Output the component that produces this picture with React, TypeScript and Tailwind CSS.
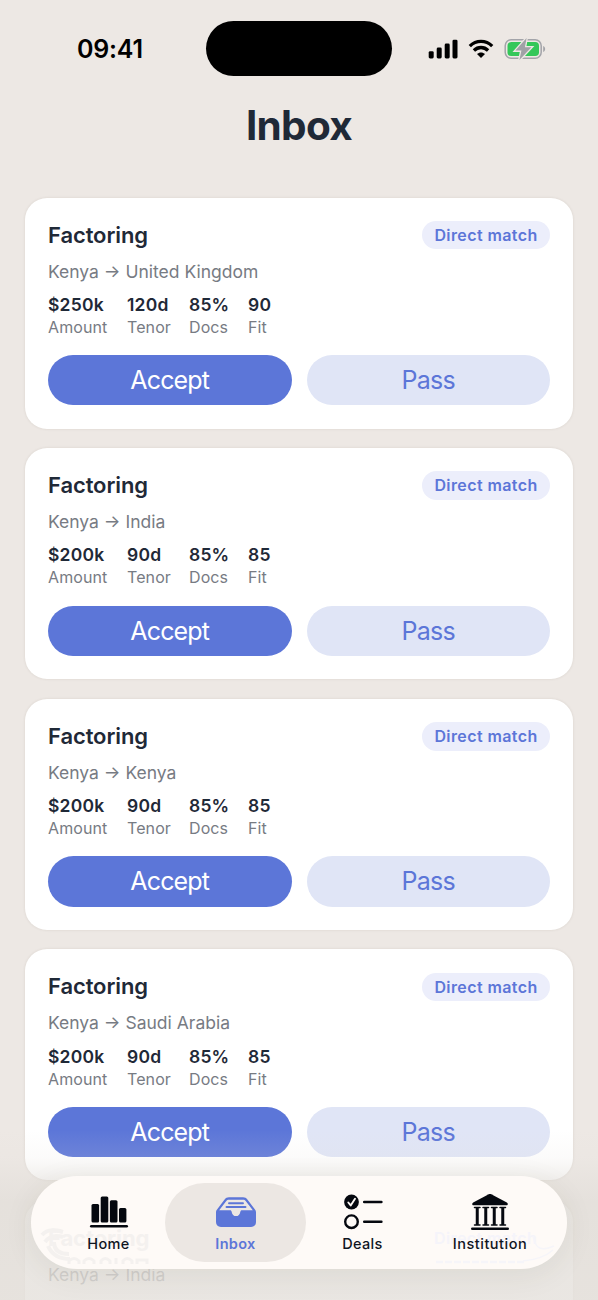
import React from 'react';

interface Deal {
  destination: string;
  amount: string;
  tenor: string;
  docs: string;
  fit: string;
}

const deals: Deal[] = [
  { destination: 'United Kingdom', amount: '$250k', tenor: '120d', docs: '85%', fit: '90' },
  { destination: 'India', amount: '$200k', tenor: '90d', docs: '85%', fit: '85' },
  { destination: 'Kenya', amount: '$200k', tenor: '90d', docs: '85%', fit: '85' },
  { destination: 'Saudi Arabia', amount: '$200k', tenor: '90d', docs: '85%', fit: '85' },
];

const StatusBar: React.FC = () => (
  <div className="flex h-[76px] shrink-0 pt-[21px]">
    <div className="w-[206px] pl-[77px] text-[25px] leading-[56px] font-semibold tracking-[-0.2px] text-black">09:41</div>
    <div className="h-[55px] w-[186px] rounded-full bg-black" />
    <div className="flex h-[55px] items-center pl-[36px]">
      <svg width="30" height="20" viewBox="0 0 30 20">
        <rect x="0.7" y="12.2" width="5" height="7.3" rx="1.4" />
        <rect x="8.7" y="8.5" width="5" height="11" rx="1.4" />
        <rect x="16.7" y="4.5" width="5" height="15" rx="1.4" />
        <rect x="24.5" y="0.7" width="5" height="18.8" rx="1.4" />
      </svg>
      <svg className="ml-[10px]" width="26" height="20" viewBox="0 0 26 20" fill="none" stroke="#000" strokeWidth="3.3">
        <path d="M1.8 7.1C8.2.9 17.8.9 24.2 7.1" />
        <path d="M5.9 11.5C10 7.5 16 7.5 20.1 11.5" />
        <path d="M9 15C11.2 12.9 14.8 12.9 17 15L13 19Z" fill="#000" stroke="none" />
      </svg>
      <svg className="ml-[10px]" width="42" height="22" viewBox="0 0 42 22">
        <rect x="1.2" y="1.7" width="36" height="18.6" rx="6" fill="none" stroke="#a3a4a9" strokeWidth="1.5" />
        <rect x="3.5" y="4" width="31.5" height="14" rx="3.8" fill="#34c759" />
        <path d="M39.2 8v6c2.6-1 2.6-5 0-6Z" fill="#a3a4a9" />
        <path
          d="M22.6 0 11.4 12.6h6L15.4 22 27.4 9.2h-6.5Z"
          fill="#a0a1a6"
          stroke="#ede8e4"
          strokeWidth="2.6"
          paintOrder="stroke"
        />
      </svg>
    </div>
  </div>
);

const Stat: React.FC<{ value: string; label: string; className: string }> = ({ value, label, className }) => (
  <div className={className}>
    <div className="text-[17.5px] leading-[22px] font-semibold tracking-[0.2px] text-[#1f2937]">{value}</div>
    <div className="text-[16px] leading-[22px] tracking-[0.1px] text-[#777b83]">{label}</div>
  </div>
);

const cardClass = 'h-[231px] shrink-0 rounded-[22px] bg-white px-[23px] shadow-[0_0_3px_rgba(60,40,20,0.1)]';

const DealCard: React.FC<{ deal: Deal }> = ({ deal }) => (
  <div className={`pt-[23px] ${cardClass}`}>
    <div className="flex h-[29px] items-center justify-between">
      <h2 className="text-[22px] leading-[29px] font-semibold tracking-[-0.1px] text-[#1f2937]">Factoring</h2>
      <span className="w-[128px] rounded-full bg-[#eceefb] text-center text-[16px] leading-[28.5px] font-semibold tracking-[0.4px] text-[#5c76d8]">
        Direct match
      </span>
    </div>
    <p className="mt-[9px] text-[17.5px] leading-[25px] text-[#777b83]">Kenya → {deal.destination}</p>
    <div className="mt-[10.2px] flex">
      <Stat value={deal.amount} label="Amount" className="w-[79px]" />
      <Stat value={deal.tenor} label="Tenor" className="w-[62px]" />
      <Stat value={deal.docs} label="Docs" className="w-[59px]" />
      <Stat value={deal.fit} label="Fit" className="w-[59px]" />
    </div>
    <div className="mt-[17.2px] flex gap-[15px] text-[25px] leading-[51.5px] tracking-[-0.85px]">
      <button className="h-[50.5px] flex-1 rounded-full bg-[#5c76d8] text-white">Accept</button>
      <button className="h-[50.5px] flex-1 rounded-full bg-[#e0e5f6] tracking-[-0.7px] text-[#5c76d8]">Pass</button>
    </div>
  </div>
);

const HomeIcon = () => (
  <svg width="40" height="36" viewBox="0 0 40 36" fill="#05080f">
    <rect x="2.5" y="10" width="7.6" height="18.5" rx="1.5" />
    <rect x="11.7" y="2.5" width="7.6" height="26" rx="1.5" />
    <rect x="20.9" y="6.3" width="7.6" height="22.2" rx="1.5" />
    <rect x="30" y="14" width="7.4" height="14.5" rx="1.5" />
    <rect x="1" y="31" width="38" height="2.5" rx="1.25" />
  </svg>
);

const InboxIcon = () => (
  <svg width="42" height="36" viewBox="0 0 42 36">
    <path
      d="M1 18.5c0-1.7.7-2.7 1.8-4L9.6 5.5C10.7 4 12 3.3 14 3.3h14c2 0 3.3.7 4.4 2.2l6.8 9c1.1 1.3 1.8 2.3 1.8 4v9.6c0 3-1.8 4.9-4.9 4.9H5.9C2.8 33 1 31.1 1 28.1Z"
      fill="#5c76d8"
    />
    <path
      d="M4.2 16.3 11.3 7c.7-.9 1.4-1.3 2.5-1.3h14.4c1.1 0 1.8.4 2.5 1.3l7.1 9.3H27c-1 0-1.5.6-1.7 1.6-.4 2.7-2 4.2-4.3 4.2s-3.9-1.5-4.3-4.2c-.2-1-.7-1.6-1.7-1.6Z"
      fill="#ece7e3"
    />
    <path d="M14 9.2h14M11.500 13h19" stroke="#5c76d8" strokeWidth="1.9" strokeLinecap="round" />
  </svg>
);

const DealsIcon = () => (
  <svg width="40" height="36" viewBox="0 0 40 36" fill="none" stroke="#05080f">
    <circle cx="8.5" cy="8" r="7.4" fill="#05080f" stroke="none" />
    <path d="m5.300 8.500 2.400 2.900 4.300-6.600" stroke="#fefaf7" strokeWidth="1.9" strokeLinecap="round" strokeLinejoin="round" />
    <circle cx="8.5" cy="27.7" r="6.3" strokeWidth="2.4" />
    <path d="M21.2 8h17.2M21.2 27.7h17.2" strokeWidth="2.5" strokeLinecap="round" />
  </svg>
);

const InstitutionIcon = () => (
  <svg width="40" height="38" viewBox="0 0 40 38" fill="#05080f">
    <path d="M18.7 1.3c.9-.4 1.7-.4 2.6 0l15.500 8.200c.7.4 1 .8 1 1.5 0 .8-.5 1.3-1.3 1.3H3.500c-.8 0-1.300-.5-1.300-1.300 0-.7.3-1.100 1-1.500Z" />
    <path
      d="M4.5 14.5h5.500M13 14.5h5.500M21.500 14.5h5.500M30 14.5h5.500M4.5 32h5.500M13 32h5.500M21.500 32h5.500M30 32h5.500"
      stroke="#05080f"
      strokeWidth="1.5"
      strokeLinecap="round"
    />
    <path d="M7.25 14v18M15.75 14v18M24.25 14v18M32.75 14v18" stroke="#05080f" strokeWidth="3" />
    <rect x="1" y="34.5" width="38" height="2.6" rx="1.3" />
  </svg>
);

const TabBar: React.FC = () => (
  <nav className="absolute top-[1176px] left-[31px] flex h-[93px] w-[536px] overflow-hidden rounded-full bg-[#fefaf7] text-[14.5px] leading-[18px] font-medium tracking-[0.35px] text-[#10151f]">
    {/* card behind the glass, refracted along the lower edge */}
    <div aria-hidden="true" className="absolute inset-0 text-[#f4f1ef]">
      <span className="absolute top-[48px] left-[17px] text-[22px] leading-[29px] font-bold tracking-[-0.1px]">Factoring</span>
      <svg className="absolute top-[52px] left-[9px]" width="40" height="36" viewBox="0 0 40 36" fill="none" stroke="currentColor" strokeWidth="4">
        <path d="M2 7C8 0 16 2 23 4M5 14C10 7 16 7 23 9M8 18C12 27 20 31 30 31M14 14C14 22 19 26 29 26" />
      </svg>
      <svg className="absolute top-[79px] left-[36px]" width="82" height="10" viewBox="0 0 82 10" fill="none" stroke="currentColor" strokeWidth="3">
        <path d="M2 9V6q5-5 10 0v3M17 9V6q5-5 10 0v3M34 9V6q4-5 9 0v3M49 9V3M56 9V6q4-5 9 0v3M70 9V5h10v4" />
      </svg>
      <span className="absolute top-[48px] left-[403px] text-[16px] leading-[29px] font-semibold tracking-[0.4px] text-[#f5f4fa]">Direct match</span>
      <svg className="absolute top-[58px] left-[400px]" width="126" height="34" viewBox="0 0 126 34" fill="none" stroke="#f6f5f9" strokeWidth="1.5">
        <path d="M102 2C104 14 110 18 123 12M92 27C104 26 114 23 122 16" />
        <path d="M5 28h90" strokeWidth="2.5" strokeDasharray="7 2" />
      </svg>
    </div>
    <div className="relative flex w-full pt-[6.5px] pl-[9px]">
      <div className="flex h-[79.5px] w-[125px] flex-col items-center pt-[11.5px] pl-[12px]">
        <HomeIcon />
        <span className="mt-[4.5px]">Home</span>
      </div>
      <div className="flex h-[79.5px] w-[141px] flex-col items-center rounded-full bg-[#ece7e3] pt-[11px] text-[#5c76d8]">
        <InboxIcon />
        <span className="mt-[5px] font-semibold">Inbox</span>
      </div>
      <div className="flex h-[79.5px] w-[113px] flex-col items-center pt-[11.5px]">
        <DealsIcon />
        <span className="mt-[4.5px]">Deals</span>
      </div>
      <div className="flex h-[79.5px] w-[142px] flex-col items-center pt-[10.5px]">
        <InstitutionIcon />
        <span className="mt-[3.5px] tracking-[0.5px]">Institution</span>
      </div>
    </div>
  </nav>
);

export default function App() {
  return (
    <div className="relative flex h-[1300px] w-[598px] flex-col overflow-hidden bg-[#ede8e4] font-['Inter','Liberation_Sans',sans-serif]">
      <StatusBar />
      <h1 className="mt-[24.5px] text-center text-[40.5px] leading-[50px] font-bold tracking-[-0.7px] text-[#1f2937]">Inbox</h1>
      <main className="mt-[47px] flex flex-col gap-[19.65px] px-[25px]">
        {deals.map((deal) => (
          <DealCard key={deal.destination} deal={deal} />
        ))}
        <div className={`pt-[62px] ${cardClass}`}>
          <p className="text-[17.5px] leading-[25px] text-[#777b83]">Kenya → India</p>
        </div>
      </main>
      <div className="pointer-events-none absolute inset-x-0 bottom-0 h-[170px] bg-[linear-gradient(to_bottom,rgba(227,223,218,0)_0px,rgba(227,223,218,0.13)_28px,rgba(227,223,218,0.5)_50px,rgba(227,223,218,0.8)_72px,rgba(229,225,220,0.82)_170px)]" />
      <div className="absolute top-[1176px] left-[31px] h-[93px] w-[536px] rounded-full shadow-[0_6px_30px_rgba(60,60,40,0.08)]" />
      <TabBar />
    </div>
  );
}
